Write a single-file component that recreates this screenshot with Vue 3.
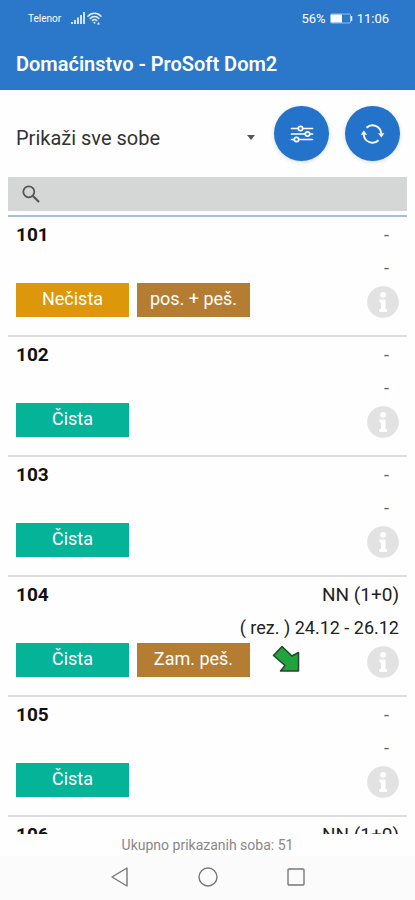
<script setup>
import { ref } from 'vue'

const filter = ref('all')
const query = ref('')

const rooms = [
  { id: 101, guest: '-', stay: '-', tags: [{ text: 'Nečista', kind: 'dirty' }, { text: 'pos. + peš.', kind: 'linen' }] },
  { id: 102, guest: '-', stay: '-', tags: [{ text: 'Čista', kind: 'clean' }] },
  { id: 103, guest: '-', stay: '-', tags: [{ text: 'Čista', kind: 'clean' }] },
  { id: 104, guest: 'NN (1+0)', stay: '( rez. ) 24.12 - 26.12', arriving: true, tags: [{ text: 'Čista', kind: 'clean' }, { text: 'Zam. peš.', kind: 'linen' }] },
  { id: 105, guest: '-', stay: '-', tags: [{ text: 'Čista', kind: 'clean' }] },
  { id: 106, guest: 'NN (1+0)', stay: '', tags: [] }
]
</script>

<template>
  <div class="screen">
    <header class="header">
      <div class="status">
        <span class="carrier">Telenor</span>
        <svg class="signal" width="14" height="12" viewBox="0 0 14 12" aria-hidden="true">
          <path d="M0 10h2v2H0zM3 8h2v4H3zM6 5.500h2V12H6zM9 3h2v9H9zM12 0h2v12h-2z" fill="#cfe4fa" />
        </svg>
        <svg class="wifi" width="15" height="13" viewBox="0 0 15 13" aria-hidden="true">
          <g fill="none" stroke="#e3f0fd" stroke-width="1.500" stroke-linecap="round">
            <path d="M1 4.200C4.500.300 10.500.300 14 4.200" />
            <path d="M3.200 6.400c2.400-2.600 6.200-2.600 8.600 0" />
            <path d="M5.400 8.500c1.200-1.200 3-1.200 4.200 0" />
          </g>
          <path d="M6 10l1.500 2L9 10zM10 12.500l1.500-2.500 1.500 2.500z" fill="#e3f0fd" />
        </svg>
        <span class="percent">56%</span>
        <svg class="battery" width="23" height="11" viewBox="0 0 23 11" aria-hidden="true">
          <rect x=".5" y="1" width="20" height="9" rx="1" fill="none" stroke="#8fbdec" />
          <rect x="1" y="1.500" width="11" height="8" fill="#fff" />
          <path d="M21.500 3v5" stroke="#e3f0fd" stroke-width="1.500" />
        </svg>
        <span class="clock">11:06</span>
      </div>
      <h1 class="title">Domaćinstvo - ProSoft Dom2</h1>
    </header>

    <main class="main">
      <div class="toolbar">
        <div class="picker">
          <select v-model="filter" class="select" aria-label="Filter soba">
            <option value="all">Prikaži sve sobe</option>
          </select>
          <svg class="caret" width="8" height="5" viewBox="0 0 8 5" aria-hidden="true">
            <path d="M0 0h8L4 5z" fill="#555" />
          </svg>
        </div>
        <button class="round" type="button" aria-label="Podešavanja">
          <svg width="24" height="18" viewBox="0 0 24 18" fill="none" stroke="#fff" stroke-width="1.700" stroke-linecap="round">
            <path d="M1.500 3.500H8M13 3.500h9.500M1.500 9H15M20 9h2.500M1.500 14.500H4M9 14.500h13.500" />
            <circle cx="10.500" cy="3.500" r="2.200" />
            <circle cx="17.500" cy="9" r="2.200" />
            <circle cx="6.500" cy="14.500" r="2.200" />
          </svg>
        </button>
        <button class="round" type="button" aria-label="Osveži">
          <svg width="24" height="22" viewBox="0 0 24 22" fill="none" stroke="#fff" stroke-width="1.900">
            <path d="M5.500 4.800A8.700 8.700 0 0 1 20.200 10" />
            <path d="M17.500 17.200A8.700 8.700 0 0 1 2.800 12" />
            <path d="M17.200 10.200h6.200L20.300 14.500zM-.2 11.800H6L2.900 7.500z" fill="#fff" stroke="none" />
          </svg>
        </button>
      </div>

      <label class="search">
        <svg width="18" height="18" viewBox="0 0 18 18" fill="none" stroke="#555" aria-hidden="true">
          <circle cx="6.800" cy="6.800" r="5.500" stroke-width="1.800" />
          <path d="M11 11l6 6" stroke-width="2.200" />
        </svg>
        <input v-model="query" type="text" class="query" aria-label="Pretraga" />
      </label>

      <ul class="rooms">
        <li v-for="room in rooms" :key="room.id" class="room">
          <div class="line">
            <strong class="number">{{ room.id }}</strong>
            <span class="guest" :class="{ none: room.guest === '-' }">{{ room.guest }}</span>
          </div>
          <div class="stay" :class="{ none: room.stay === '-' }">{{ room.stay }}</div>
          <div class="actions">
            <button v-for="tag in room.tags" :key="tag.text" type="button" class="tag" :class="tag.kind">{{ tag.text }}</button>
            <svg v-if="room.arriving" class="arrow" width="28" height="28" viewBox="0 0 28 28" aria-hidden="true">
              <path d="M1.500 10.500L10 1.500l10 9.500 6.500-3.500v18.500H8.500l4.500-5.500z" fill="#22a43c" stroke="#24452b" stroke-width="1.500" stroke-linejoin="round" />
            </svg>
            <button type="button" class="info" aria-label="Informacije">
              <svg width="32" height="32" viewBox="0 0 32 32" aria-hidden="true">
                <circle cx="16" cy="16" r="15.800" fill="#e2e2e2" />
                <circle cx="16" cy="8.800" r="2.900" fill="#fff" />
                <path d="M12.500 13.500h6v9.500H20v3h-7.500v-3H14v-6.500h-1.500z" fill="#fff" />
              </svg>
            </button>
          </div>
        </li>
      </ul>
    </main>

    <p class="total">Ukupno prikazanih soba: 51</p>

    <nav class="nav" aria-label="Sistem">
      <button type="button" class="key" aria-label="Nazad">
        <svg width="20" height="22" viewBox="0 0 20 22" fill="none" stroke="#777" stroke-width="1.400" stroke-linejoin="round">
          <path d="M17 2v18L2 11z" />
        </svg>
      </button>
      <button type="button" class="key" aria-label="Početna">
        <svg width="20" height="22" viewBox="0 0 20 22" fill="none" stroke="#777" stroke-width="1.400">
          <circle cx="10" cy="11" r="9" />
        </svg>
      </button>
      <button type="button" class="key" aria-label="Nedavno">
        <svg width="20" height="22" viewBox="0 0 20 22" fill="none" stroke="#777" stroke-width="1.400">
          <rect x="2" y="3" width="16" height="16" rx="1" />
        </svg>
      </button>
    </nav>
  </div>
</template>

<style>
body {
  margin: 0;
  background: #fff;
}
</style>

<style scoped>
.screen {
  display: flex;
  flex-direction: column;
  height: 100vh;
  background: #fefefe;
  color: #222;
  font-family: Roboto, "Liberation Sans", sans-serif;
}

button {
  border: 0;
  padding: 0;
  font: inherit;
}

.header {
  box-sizing: border-box;
  height: 90px;
  padding: 8px 16px 0;
  background: #2b78ca;
  color: #fff;
}

.status {
  display: flex;
  align-items: center;
  height: 20px;
  padding: 0 10px 0 12px;
}

.carrier {
  font-size: 10px;
}

.signal {
  margin-left: 10px;
}

.wifi {
  margin-left: 2px;
}

.percent {
  margin-left: auto;
  font-size: 13px;
}

.battery {
  margin: 0 4px;
}

.clock {
  font-size: 13px;
}

.title {
  margin: 20px 0 0;
  font-size: 20px;
  line-height: 32px;
  font-weight: 600;
}

.main {
  display: flex;
  flex: 1;
  flex-direction: column;
  min-height: 0;
  padding: 0 8px;
}

.toolbar {
  display: flex;
  align-items: center;
  gap: 16px;
  box-sizing: border-box;
  height: 87px;
  padding: 0 7px 0 8px;
}

.picker {
  display: flex;
  flex: 1;
  align-items: center;
  padding: 8px 3px 0 0;
}

.select {
  flex: 1;
  min-width: 0;
  height: 32px;
  margin: 0;
  padding: 0;
  border: 0;
  appearance: none;
  background: transparent;
  color: #333;
  font: inherit;
  font-size: 20px;
}

.round {
  display: flex;
  align-items: center;
  justify-content: center;
  width: 55px;
  height: 55px;
  border-radius: 50%;
  background: #2473cb;
  box-shadow: 0 1px 4px rgba(0, 0, 0, 0.15);
}

.search {
  display: flex;
  align-items: center;
  gap: 8px;
  height: 34px;
  padding: 0 14px;
  background: #d5d7d6;
}

.query {
  flex: 1;
  min-width: 0;
  height: 32px;
  padding: 0;
  border: 0;
  outline: 0;
  background: transparent;
  font: inherit;
  font-size: 18px;
}

.rooms {
  flex: 1;
  min-height: 0;
  margin: 4px 0 0;
  padding: 0;
  overflow: hidden;
  border-top: 2px solid #a9bfd8;
  list-style: none;
}

.room {
  box-sizing: border-box;
  height: 120px;
  padding: 0 8px;
  border-bottom: 2px solid #dcdcdc;
}

.line {
  display: flex;
  justify-content: space-between;
  font-size: 19px;
  line-height: 36px;
}

.number {
  color: #111;
  font-weight: 700;
}

.stay {
  min-height: 30px;
  font-size: 18px;
  line-height: 30px;
  text-align: right;
}

.line .none,
.stay.none {
  padding-right: 10px;
  color: #666;
  font-size: 18px;
}

.actions {
  display: flex;
  align-items: flex-start;
  gap: 8px;
}

.tag {
  width: 113px;
  height: 34px;
  padding-bottom: 4px;
  color: #fff;
  font-size: 18px;
}

.dirty {
  background: #dc980a;
}

.linen {
  background: #b47d32;
}

.clean {
  background: #05b399;
}

.arrow {
  margin: 2px 0 0 14px;
}

.info {
  display: flex;
  margin: 3px 0 0 auto;
  background: transparent;
}

.total {
  margin: 0;
  color: #888;
  font-size: 14px;
  line-height: 22px;
  text-align: center;
}

.nav {
  display: flex;
  justify-content: center;
  align-items: center;
  gap: 68px;
  box-sizing: border-box;
  height: 44px;
  padding-bottom: 2px;
  background: #fbfbfb;
}

.key {
  display: flex;
  background: transparent;
}
</style>
